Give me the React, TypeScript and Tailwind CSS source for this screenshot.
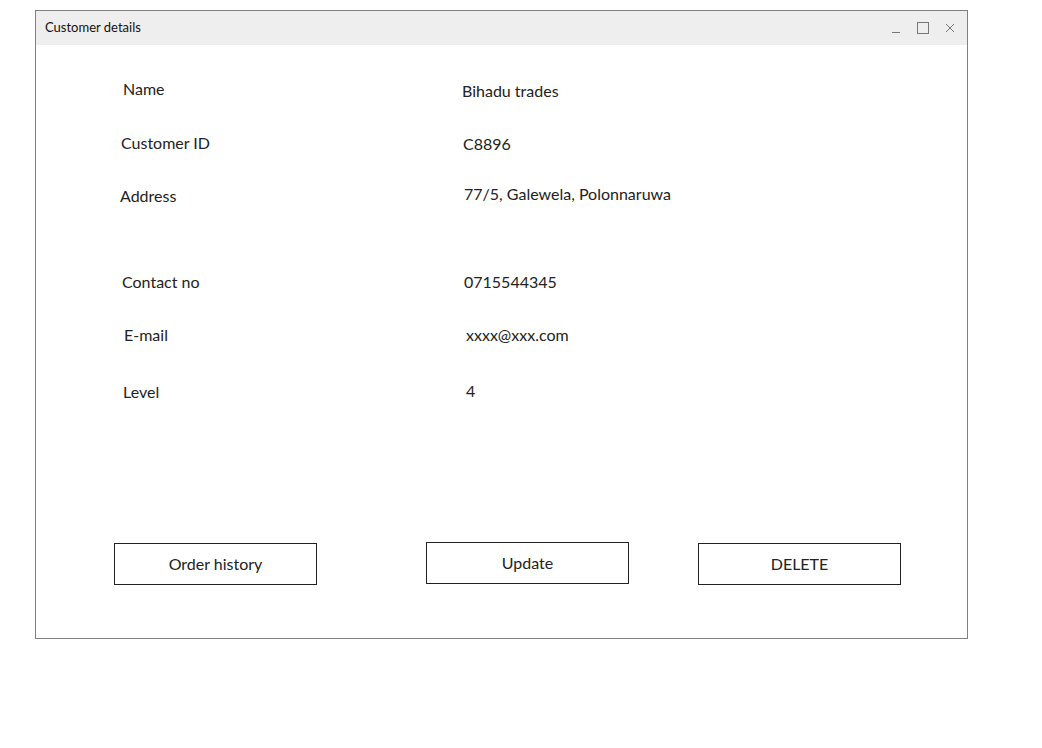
const rows = [
  { label: 'Name', value: 'Bihadu trades', h: 'h-[54px]', lx: 'pl-[87px]', vw: 'w-[426px]', ly: '', vy: 'mt-[2px]' },
  { label: 'Customer ID', value: 'C8896', h: 'h-[52px]', lx: 'pl-[85px]', vw: 'w-[427px]', ly: '', vy: 'mt-[1px]' },
  { label: 'Address', value: '77/5, Galewela, Polonnaruwa', h: 'h-[87px]', lx: 'pl-[84px]', vw: 'w-[428px]', ly: 'mt-[1px]', vy: '-mt-[1px]' },
  { label: 'Contact no', value: '0715544345', h: 'h-[53px]', lx: 'pl-[86px]', vw: 'w-[428px]', ly: '', vy: '' },
  { label: 'E-mail', value: 'xxxx@xxx.com', h: 'h-[57px]', lx: 'pl-[88px]', vw: 'w-[430px]', ly: '', vy: '' },
  { label: 'Level', value: '4', h: 'h-[24px]', lx: 'pl-[87px]', vw: 'w-[430px]', ly: '', vy: '-mt-[1px]' },
];

export default function App() {
  return (
    <div className="w-[1042px] h-[748px] bg-white pt-[10px] pl-[35px] font-['Lato','Liberation_Sans',sans-serif] text-[#222]">
      <div className="w-[933px] h-[629px] border border-[#808080] flex flex-col">
        <div className="h-[34px] bg-[#eeeeee] flex items-center pl-[9px] pr-[12px]">
          <span className="text-[13px] text-[#111]">Customer details</span>
          <div className="ml-auto flex items-center gap-[16px]">
            <svg width="10" height="12" viewBox="0 0 10 12">
              <line x1="1" y1="10.5" x2="9" y2="10.5" stroke="#777" strokeWidth="1" />
            </svg>
            <svg width="12" height="12" viewBox="0 0 12 12">
              <rect x="0.5" y="0.5" width="11" height="11" fill="none" stroke="#777" strokeWidth="1" />
            </svg>
            <svg width="10" height="10" viewBox="0 0 10 10">
              <path d="M1 1 L9 9 M9 1 L1 9" stroke="#777" strokeWidth="1" />
            </svg>
          </div>
        </div>

        <div className="pt-[32px] text-[16px] leading-6">
          {rows.map((r) => (
            <div key={r.label} className={`flex items-start ${r.h}`}>
              <div className={`${r.vw} ${r.lx} ${r.ly} shrink-0`}>{r.label}</div>
              <div className={`whitespace-nowrap ${r.vy}`}>{r.value}</div>
            </div>
          ))}
        </div>

        <div className="mt-[138px] flex items-start text-[16px]">
          <button className="ml-[78px] mt-[1px] w-[203px] h-[42px] border border-[#222] bg-white">Order history</button>
          <button className="ml-[109px] w-[203px] h-[42px] border border-[#222] bg-white">Update</button>
          <button className="ml-[69px] mt-[1px] w-[203px] h-[42px] border border-[#222] bg-white">DELETE</button>
        </div>
      </div>
    </div>
  );
}
